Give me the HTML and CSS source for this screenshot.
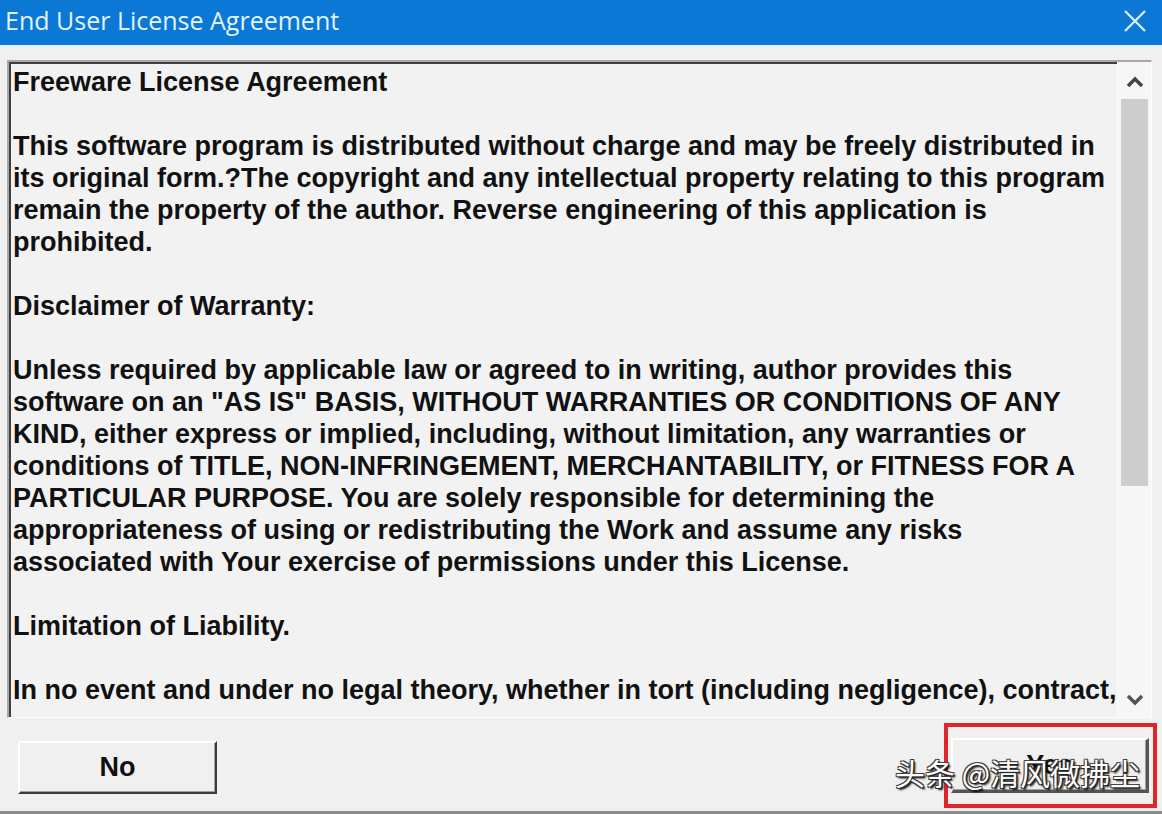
FILE: index.html
```html
<!DOCTYPE html>
<html>
<head>
    <meta charset="utf-8">
    <title>End User License Agreement</title>
    <link rel="stylesheet" href="styles.css">
</head>
<body>
    <div class="window">
        <div class="titlebar">
            <span class="title">End User License Agreement</span>
            <svg class="close" width="22" height="22" viewBox="0 0 22 22">
                <path d="M1 1 L21 21 M21 1 L1 21" stroke="#dff1ff" stroke-width="2.2" fill="none"/>
            </svg>
        </div>
        <div class="client">
            <div class="textbox">
                <div class="text">
                    <p>Freeware License Agreement</p>
                    <p>This software program is distributed without charge and may be freely distributed in<br>
                        its original form.?The copyright and any intellectual property relating to this program<br>
                        remain the property of the author. Reverse engineering of this application is<br>
                        prohibited.</p>
                    <p>Disclaimer of Warranty:</p>
                    <p>Unless required by applicable law or agreed to in writing, author provides this<br>
                        software on an "AS IS" BASIS, WITHOUT WARRANTIES OR CONDITIONS OF ANY<br>
                        KIND, either express or implied, including, without limitation, any warranties or<br>
                        conditions of TITLE, NON-INFRINGEMENT, MERCHANTABILITY, or FITNESS FOR A<br>
                        PARTICULAR PURPOSE. You are solely responsible for determining the<br>
                        appropriateness of using or redistributing the Work and assume any risks<br>
                        associated with Your exercise of permissions under this License.</p>
                    <p>Limitation of Liability.</p>
                    <p>In no event and under no legal theory, whether in tort (including negligence), contract,</p>
                </div>
                <div class="scrollbar">
                    <svg class="arrow" width="18" height="12" viewBox="0 0 18 12">
                        <path d="M2 10 L9 3 L16 10" stroke="#444" stroke-width="3.5" fill="none"/>
                    </svg>
                    <div class="thumb"></div>
                    <div class="track"></div>
                    <svg class="arrow" width="18" height="12" viewBox="0 0 18 12">
                        <path d="M2 2 L9 9 L16 2" stroke="#555" stroke-width="3.5" fill="none"/>
                    </svg>
                </div>
            </div>
            <div class="buttons">
                <button class="btn">No</button>
                <div class="mark">
                    <button class="btn yes">Yes</button>
                </div>
            </div>
        </div>
        <div class="watermark">头条 @清风微拂尘</div>
    </div>
</body>
</html>
```

FILE: styles.css
```css
html, body {
    margin: 0;
    padding: 0;
}

body {
    width: 1162px;
    height: 814px;
    overflow: hidden;
    background: #f0f0f0;
}

.window {
    position: relative;
    height: 814px;
    display: flex;
    flex-direction: column;
}

.titlebar {
    height: 45px;
    background: #0a78d4;
    display: flex;
    align-items: center;
    justify-content: space-between;
    padding: 0 16px 0 5px;
    border-bottom: 2px solid #e6eef6;
}

.title {
    font-family: 'Open Sans', sans-serif;
    font-size: 25px;
    color: #e4f3ff;
    margin-top: -5px;
}

.close {
    margin-top: -4px;
}

.client {
    flex: 1;
    display: flex;
    flex-direction: column;
    padding: 13px 10px 0 7px;
    border-bottom: 3px solid #8c8c8c;
}

.textbox {
    height: 655px;
    display: flex;
    border-top: 2px solid #a8a8a8;
    border-left: 2px solid #a8a8a8;
    border-right: 1px solid #ffffff;
    border-bottom: 1px solid #ffffff;
    box-shadow: inset 2px 2px 0 #404040;
    background: #f2f2f2;
    overflow: hidden;
}

.text {
    flex: 1;
    padding: 4px 0 0 4px;
    font-family: 'Liberation Sans', Arial, sans-serif;
    font-weight: 700;
    font-size: 27px;
    line-height: 32px;
    color: #111;
    white-space: nowrap;
    overflow: hidden;
}

.text p {
    margin: 0 0 32px 0;
}

.scrollbar {
    width: 33px;
    display: flex;
    flex-direction: column;
    align-items: center;
    background: #f6f6f6;
    border-left: 1px solid #fbfbfb;
    padding-top: 4px;
}

.arrow {
    margin: 10px 0 11px 0;
}

.thumb {
    width: 27px;
    height: 387px;
    background: #cdcdcd;
}

.track {
    flex: 1;
}

.buttons {
    flex: 1;
    display: flex;
    align-items: center;
    justify-content: space-between;
    padding: 0 0 0 11px;
}

.btn {
    width: 199px;
    height: 53px;
    font-family: 'Liberation Sans', Arial, sans-serif;
    font-weight: 700;
    font-size: 27px;
    color: #111;
    background: #f0f0f0;
    border-top: 2px solid #ffffff;
    border-left: 2px solid #ffffff;
    border-right: 2px solid #3c3c3c;
    border-bottom: 2px solid #3c3c3c;
    box-shadow: inset -1px -1px 0 #a0a0a0;
    padding: 0;
    margin-top: 6px;
}

.mark {
    border: 4px solid #e0252a;
    padding: 11px 4px 11px 3px;
    margin-right: -5px;
    margin-bottom: -2px;
}

.yes {
    margin-top: 0;
    width: 198px;
    height: 55px;
    border-right-width: 3px;
    border-bottom-width: 3px;
    border-right-color: #555;
    border-bottom-color: #555;
}

.watermark {
    position: absolute;
    left: 895px;
    top: 750px;
    font-family: 'Noto Sans CJK SC', sans-serif;
    font-size: 30px;
    color: #ffffff;
    text-shadow: 1px 1px 0 #222, -1px -1px 0 #444, 1px -1px 0 #333, -1px 1px 0 #333, 2px 2px 2px #000;
}
```
